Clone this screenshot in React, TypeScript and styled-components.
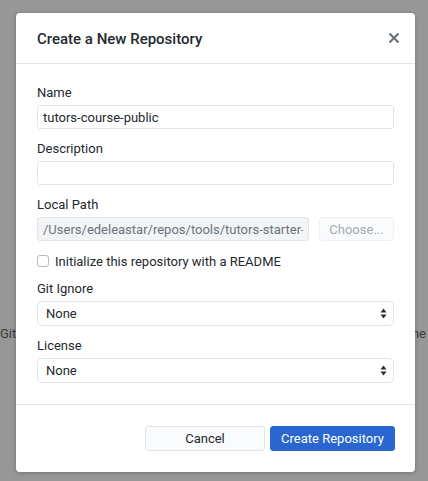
import React from 'react';
import styled, { createGlobalStyle } from 'styled-components';

const GlobalStyle = createGlobalStyle`
  html, body {
    margin: 0;
    padding: 0;
  }
  body {
    font-family: Roboto, "Liberation Sans", sans-serif;
    -webkit-font-smoothing: antialiased;
  }
`;

const Screen = styled.div`
  position: relative;
  width: 428px;
  height: 481px;
  overflow: hidden;
  background-color: #979797;
`;

const BehindText = styled.div`
  position: absolute;
  left: 0;
  right: 2px;
  top: 326px;
  display: flex;
  justify-content: space-between;
  font-size: 13px;
  color: #3a3a3a;
  white-space: nowrap;
`;

const Dialog = styled.div`
  position: absolute;
  left: 16px;
  top: 13px;
  width: 399px;
  display: flex;
  flex-direction: column;
  background: #fff;
  border-radius: 4px;
  box-shadow: 0 1px 4px rgba(0, 0, 0, 0.25);
  color: #24292e;
`;

const Header = styled.div`
  height: 50px;
  display: flex;
  align-items: center;
  justify-content: space-between;
  padding: 0 9px 0 21px;
  border-bottom: 1px solid #e1e4e8;
`;

const Title = styled.h1`
  margin: 2px 0 0;
  font-size: 15px;
  font-weight: 500;
`;

const Close = styled.button`
  width: 24px;
  height: 24px;
  padding: 0;
  border: none;
  background: none;
  display: flex;
  align-items: center;
  justify-content: center;
`;

const Body = styled.div`
  padding: 21px 21px 21px;
  display: flex;
  flex-direction: column;
  gap: 12px;
  border-bottom: 1px solid #e1e4e8;
`;

const Field = styled.div`
  display: flex;
  flex-direction: column;
  gap: 4px;
`;

const Label = styled.label`
  font-size: 13px;
  line-height: 16px;
  height: 16px;
`;

const Input = styled.input<{ $disabled?: boolean }>`
  box-sizing: border-box;
  height: 24px;
  width: 100%;
  padding: 0 5px;
  font-family: inherit;
  font-size: 13px;
  border: 1px solid #e1e4e8;
  border-radius: 3px;
  color: ${(p) => (p.$disabled ? '#6a737d' : '#24292e')};
  background: ${(p) => (p.$disabled ? '#f3f4f6' : '#fff')};
  outline: none;
`;

const PathRow = styled.div`
  display: flex;
  gap: 10px;
`;

const ChooseButton = styled.button`
  flex: 0 0 75px;
  height: 24px;
  box-sizing: border-box;
  font-family: inherit;
  font-size: 13px;
  color: #a3aab1;
  background: #fafbfc;
  border: 1px solid #eef0f2;
  border-radius: 3px;
`;

const CheckRow = styled.label`
  height: 16px;
  display: flex;
  align-items: center;
  gap: 6px;
  font-size: 13px;
`;

const Box = styled.span`
  box-sizing: border-box;
  width: 12px;
  height: 12px;
  border: 1px solid #b5b9bd;
  border-radius: 3px;
  background: #fff;
`;

const Select = styled.div`
  box-sizing: border-box;
  height: 25px;
  display: flex;
  align-items: center;
  justify-content: space-between;
  padding: 0 6px 0 8px;
  border: 1px solid #e1e4e8;
  border-radius: 5px;
  font-size: 13px;
`;

const Footer = styled.div`
  padding: 21px 20px 21px 21px;
  display: flex;
  justify-content: flex-end;
  gap: 5px;
`;

const Button = styled.button<{ $primary?: boolean }>`
  box-sizing: border-box;
  height: 25px;
  width: ${(p) => (p.$primary ? '125px' : '120px')};
  font-family: inherit;
  font-size: 13px;
  border-radius: 3px;
  border: 1px solid ${(p) => (p.$primary ? '#2a66d0' : '#e1e4e8')};
  color: ${(p) => (p.$primary ? '#fff' : '#24292e')};
  background: ${(p) => (p.$primary ? '#2a66d0' : '#fafbfc')};
`;

const Arrows = () => (
  <svg width="7" height="11" viewBox="0 0 7 11">
    <path d="M3.5 0.5 L6.5 4.5 H0.5 Z M3.5 10.5 L0.5 6.5 H6.5 Z" fill="#2c2c2c" />
  </svg>
);

const App = () => {
  return (
    <Screen>
      <GlobalStyle />
      <BehindText>
        <span>Gitlab</span>
        <span>none</span>
      </BehindText>
      <Dialog>
        <Header>
          <Title>Create a New Repository</Title>
          <Close>
            <svg width="12" height="12" viewBox="0 0 12 12">
              <path d="M1.5 1.5 L10.5 10.5 M10.5 1.5 L1.5 10.5" stroke="#6a737d" strokeWidth="2.2" />
            </svg>
          </Close>
        </Header>
        <Body>
          <Field>
            <Label>Name</Label>
            <Input defaultValue="tutors-course-public" />
          </Field>
          <Field>
            <Label>Description</Label>
            <Input defaultValue="" />
          </Field>
          <Field>
            <Label>Local Path</Label>
            <PathRow>
              <Input $disabled readOnly defaultValue="/Users/edeleastar/repos/tools/tutors-starter-1,3" />
              <ChooseButton>Choose...</ChooseButton>
            </PathRow>
          </Field>
          <CheckRow>
            <Box />
            Initialize this repository with a README
          </CheckRow>
          <Field>
            <Label>Git Ignore</Label>
            <Select>
              None
              <Arrows />
            </Select>
          </Field>
          <Field>
            <Label>License</Label>
            <Select>
              None
              <Arrows />
            </Select>
          </Field>
        </Body>
        <Footer>
          <Button>Cancel</Button>
          <Button $primary>Create Repository</Button>
        </Footer>
      </Dialog>
    </Screen>
  );
};

export default App;
